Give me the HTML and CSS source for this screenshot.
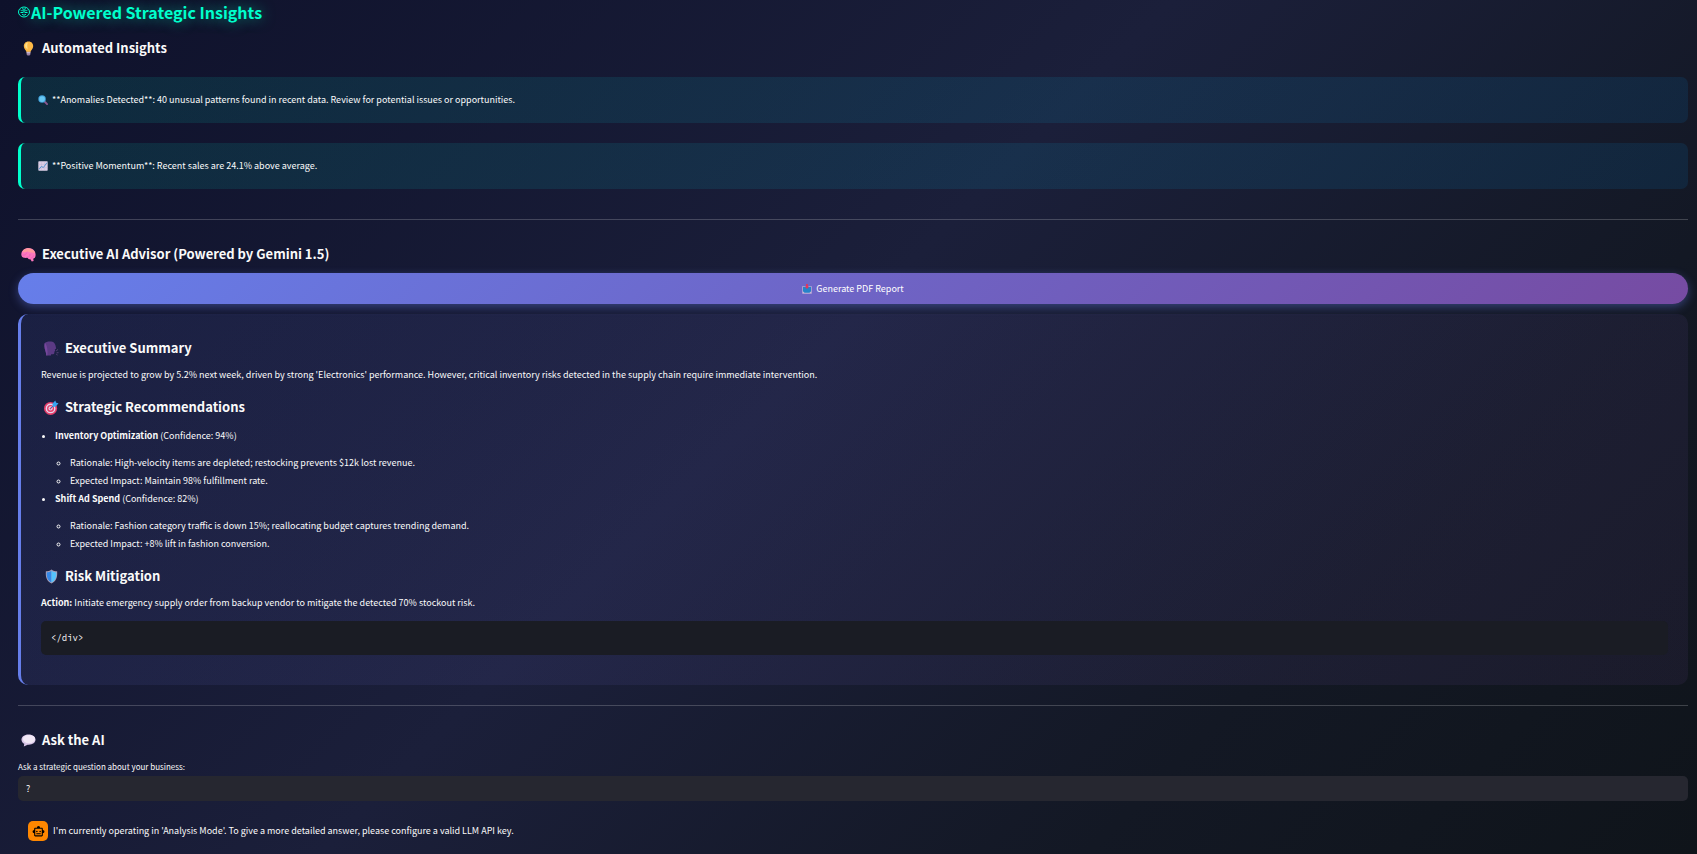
FILE: index.html
```
<!doctype html>
<html lang="en">
  <head>
    <meta charset="utf-8">
    <title>AI-Powered Strategic Insights</title>
    <link rel="stylesheet" href="styles.css">
  </head>

  <body>
    <main class="page">
      <h2 class="page-title">
        <svg class="title-icon" viewBox="0 0 24 24" fill="none" stroke="currentColor" stroke-width="2">
          <ellipse cx="12" cy="12" rx="11" ry="10"/>
          <path d="M5 8c3 3 5 0 7 2 2-2 4 1 7-2M8 5c2 2 6 2 8 0M5 13h5M14 13h5M8 16c2 3 6 3 8 0M12 10v4"/>
        </svg>
        AI-Powered Strategic Insights
      </h2>

      <h3 class="heading">
        <svg class="emoji" viewBox="0 0 32 32">
          <path d="M16 1C9 1 6 6 6 11c0 6 5 8 6 13h8c1-5 6-7 6-13 0-5-3-10-10-10z" fill="#fdb946"/>
          <path d="M15 3c-5 1-7 5-6 9 1 3 4 4 5 6 0-6-2-11 1-15z" fill="#ffe08a"/>
          <path d="M12 23h8v5c0 4-8 4-8 0z" fill="#9c83a6"/>
          <path d="M12 25h8" stroke="#d8cbdc" stroke-width="2"/>
        </svg>
        Automated Insights
      </h3>

      <div class="insights">
        <div class="insight">
          <svg class="emoji-small" viewBox="0 0 32 32">
            <path d="M20 20l9 9" stroke="#8b568f" stroke-width="6" stroke-linecap="round"/>
            <circle cx="13" cy="13" r="12" fill="#3f9fd8"/>
            <circle cx="13" cy="13" r="9" fill="#68c8f4"/>
          </svg>
          **Anomalies Detected**: 40 unusual patterns found in recent data. Review for potential issues or opportunities.
        </div>
        <div class="insight">
          <svg class="emoji-small" viewBox="0 0 32 32">
            <rect x="1" y="1" width="30" height="30" rx="2" fill="#dccfe6"/>
            <path d="M1 11h30M1 21h30M11 1v30M21 1v30" stroke="#bcaecb" stroke-width="1"/>
            <path d="M3 27l8-10 6 4L29 5" fill="none" stroke="#4c91cf" stroke-width="3"/>
          </svg>
          **Positive Momentum**: Recent sales are 24.1% above average.
        </div>
      </div>

      <hr class="divider">

      <h3 class="heading">
        <svg class="emoji" viewBox="0 0 32 32">
          <path d="M1 18C-1 9 7 2 16 2c8 0 15 6 15 13 1 6-2 10-5 10l1 5-4 1-3-5c-3 1-5-1-6-3-5 1-12 0-13-5z" fill="#fc77bd"/>
          <path d="M3 10c3-6 10-8 16-7 6 1 11 6 11 11-5-5-11 0-16-5-3 2-7 3-11 1z" fill="#ff9a9c"/>
          <path d="M3 17c5 2 8-2 9-5M12 22c5 0 8-3 7-7M20 24c4-1 6-3 7-6" fill="none" stroke="#e55bbd" stroke-width="1.5"/>
        </svg>
        Executive AI Advisor (Powered by Gemini 1.5)
      </h3>

      <button class="report-button" type="button">
        <svg class="emoji-small" viewBox="0 0 32 32">
          <path d="M1 7h30v24H1z" fill="#cbb8d8"/>
          <path d="M3 9h26v14l-5 5H8l-5-5z" fill="#2583c9"/>
          <path d="M13 0h6v8h4l-7 8-7-8h4z" fill="#e2365c"/>
        </svg>
        Generate PDF Report
      </button>

      <section class="advisor">
        <h3 class="heading">
          <svg class="emoji" viewBox="0 0 32 32">
            <path d="M1 5c4-5 17-5 21-1 3 4 3 8 4 12l-3 2 1 3-2 2c1 6-4 6-7 5v3H5C5 22-1 16 1 5z" fill="#5b3a84"/>
            <path d="M2 5c3 1 7 12 5 26H5C5 22-1 16 2 5z" fill="#76479c"/>
            <path d="M26 21l4-3M27 25h4M26 28l3 2" stroke="#5a4379" stroke-width="2"/>
          </svg>
          Executive Summary
        </h3>
        <p class="text">Revenue is projected to grow by 5.2% next week, driven by strong 'Electronics' performance. However, critical inventory risks detected in the supply chain require immediate intervention.</p>

        <h3 class="heading">
          <svg class="emoji" viewBox="0 0 32 32">
            <circle cx="14" cy="18" r="14" fill="#e43e6b"/>
            <circle cx="14" cy="18" r="10.5" fill="#e6d6ec"/>
            <circle cx="14" cy="18" r="7.5" fill="#e43e6b"/>
            <circle cx="14" cy="18" r="4.5" fill="#e6d6ec"/>
            <circle cx="14" cy="18" r="2" fill="#e43e6b"/>
            <path d="M14 18L24 8" stroke="#246fb1" stroke-width="2"/>
            <path d="M18 8l6-7 2 5 5 1-6 7-6 1z" fill="#36a5ef"/>
          </svg>
          Strategic Recommendations
        </h3>
        <ul class="actions">
          <li><strong>Inventory Optimization</strong> (Confidence: 94%)
            <ul class="details">
              <li>Rationale: High-velocity items are depleted; restocking prevents $12k lost revenue.</li>
              <li>Expected Impact: Maintain 98% fulfillment rate.</li>
            </ul>
          </li>
          <li><strong>Shift Ad Spend</strong> (Confidence: 82%)
            <ul class="details">
              <li>Rationale: Fashion category traffic is down 15%; reallocating budget captures trending demand.</li>
              <li>Expected Impact: +8% lift in fashion conversion.</li>
            </ul>
          </li>
        </ul>

        <h3 class="heading">
          <svg class="emoji" viewBox="0 0 32 32">
            <path d="M16 1c4 3 8 4 12 4 1 13-2 21-12 26C6 26 3 18 4 5c4 0 8-1 12-4z" fill="#a9a0b8"/>
            <path d="M16 3v26C8 25 5 17 6 7c4 0 7-1 10-4z" fill="#3488e8"/>
            <path d="M16 3v26c8-4 11-12 10-22-4 0-7-1-10-4z" fill="#55c4fc"/>
          </svg>
          Risk Mitigation
        </h3>
        <p class="text"><strong>Action:</strong> Initiate emergency supply order from backup vendor to mitigate the detected 70% stockout risk.</p>

        <pre class="code"><code>&lt;/div&gt;</code></pre>
      </section>

      <hr class="divider">

      <h3 class="heading">
        <svg class="emoji" viewBox="0 0 32 32">
          <path d="M16 3C7 3 1 8 1 14c0 5 3 8 6 9l-1 6 8-4c10 1 17-4 17-11C31 8 25 3 16 3z" fill="#d9c6e8"/>
          <ellipse cx="17" cy="13" rx="13" ry="9" fill="#f1e8f6"/>
        </svg>
        Ask the AI
      </h3>

      <label class="label" for="question">Ask a strategic question about your business:</label>
      <input class="question" id="question" type="text" value="?">

      <div class="message">
        <span class="avatar">
          <svg viewBox="0 0 24 24">
            <path fill-rule="evenodd" d="M20 9V7c0-1.100-.9-2-2-2h-3a3 3 0 0 0-6 0H6c-1.100 0-2 .9-2 2v2a3 3 0 0 0 0 6v4c0 1.100.9 2 2 2h12c1.100 0 2-.9 2-2v-4a3 3 0 0 0 0-6zM18 19H6V7h12zM9 10.500a1.500 1.500 0 1 0 0 3 1.500 1.500 0 0 0 0-3zM15 10.500a1.500 1.500 0 1 0 0 3 1.500 1.500 0 0 0 0-3zM8 15h8v2H8z"/>
          </svg>
        </span>
        I'm currently operating in 'Analysis Mode'. To give a more detailed answer, please configure a valid LLM API key.
      </div>
    </main>
  </body>
</html>
```
FILE: styles.css
```
* {
  box-sizing: border-box;
}

body {
  margin: 0;
  min-height: 100vh;
  background: linear-gradient(135deg, #0e112b 0%, #1b1f3a 46%, #131824 76%, #0f141a 100%);
  color: #fafafa;
  font-family: "Noto Sans CJK JP", "Noto Sans", sans-serif;
  font-size: 9px;
  line-height: 18px;
}

.page {
  padding: 1px 9px 0 18px;
}

/* Headings */
.page-title {
  display: flex;
  align-items: center;
  gap: 1px;
  margin: 0 0 5px;
  font-size: 16px;
  font-weight: 700;
  line-height: 22px;
  color: #00ffcc;
  text-shadow: 0 0 14px rgba(0, 255, 204, 0.5);
}

.title-icon {
  width: 12px;
  height: 12px;
}

.heading {
  display: flex;
  align-items: center;
  gap: 6px;
  margin: 0;
  padding: 10px 0 8px 3px;
  font-size: 13px;
  font-weight: 600;
  line-height: 20px;
}

.emoji {
  width: 15px;
  height: 15px;
}

.emoji-small {
  width: 10px;
  height: 10px;
}

/* Insight boxes */
.insights {
  display: flex;
  flex-direction: column;
  gap: 20px;
  padding: 11px 0 10px;
}

.insight {
  display: flex;
  align-items: center;
  gap: 4px;
  padding: 14px 17px;
  background: linear-gradient(135deg, rgba(0, 255, 204, 0.1), rgba(0, 153, 255, 0.1));
  border-left: 3px solid #00ffcc;
  border-radius: 7px;
}

.divider {
  height: 1px;
  margin: 20px 0 14px;
  border: 0;
  background: rgba(250, 250, 250, 0.2);
}

/* Report button */
.report-button {
  display: flex;
  align-items: center;
  justify-content: center;
  gap: 4px;
  width: 100%;
  height: 31px;
  margin-top: 1px;
  padding: 0;
  border: 0;
  border-radius: 16px;
  background: linear-gradient(135deg, #667eea 0%, #764ba2 100%);
  box-shadow: 0 3px 10px rgba(102, 126, 234, 0.4);
  color: #fff;
  font: inherit;
  cursor: pointer;
}

/* Advisor card */
.advisor {
  margin-top: 10px;
  padding: 14px 20px 30px;
  background: linear-gradient(135deg, rgba(102, 126, 234, 0.1), rgba(118, 75, 162, 0.1));
  border-left: 3px solid #667eea;
  border-radius: 10px;
}

.text {
  margin: 0 0 3px;
}

.actions {
  margin: 2px 0 3px;
  padding-left: 14px;
}

.details {
  margin: 0;
  padding: 9px 0 0 15px;
}

.code {
  margin: 9px 0 0;
  padding: 8px 10px;
  background: #1a1c24;
  border-radius: 5px;
}

.code code {
  font-family: "Source Code Pro", "DejaVu Sans Mono", monospace;
  font-size: 9px;
}

/* Question box */
.label {
  display: block;
  font-size: 8px;
}

.question {
  display: block;
  width: 100%;
  height: 25px;
  padding: 0 8px;
  border: 0;
  border-radius: 5px;
  background: #262730;
  color: #fafafa;
  font: inherit;
}

.message {
  display: flex;
  align-items: center;
  gap: 5px;
  padding: 20px 10px 12px;
}

.avatar {
  display: flex;
  align-items: center;
  justify-content: center;
  width: 20px;
  height: 20px;
  border-radius: 5px;
  background: #ff8700;
}

.avatar svg {
  width: 13px;
  height: 13px;
}
```
